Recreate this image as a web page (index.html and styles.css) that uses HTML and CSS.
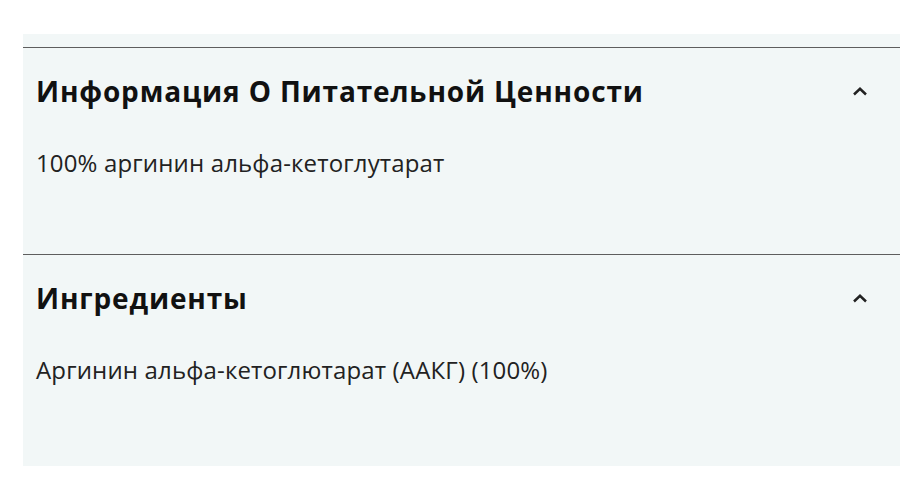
FILE: index.html
```html
<!DOCTYPE html>
<html lang="ru">
<head>
<meta charset="utf-8">
<link rel="stylesheet" href="styles.css">
</head>
<body>
<div class="panel">
  <section class="acc">
    <div class="acc-head">
      <h2 class="acc-title">Информация О Питательной Ценности</h2>
      <svg class="chev" width="14" height="9" viewBox="0 0 14 9"><path d="M1 7.5 L7 1.8 L13 7.5" fill="none" stroke="#222" stroke-width="2.5"/></svg>
    </div>
    <p class="acc-body">100% аргинин альфа-кетоглутарат</p>
  </section>
  <section class="acc acc-last">
    <div class="acc-head">
      <h2 class="acc-title">Ингредиенты</h2>
      <svg class="chev" width="14" height="9" viewBox="0 0 14 9"><path d="M1 7.5 L7 1.8 L13 7.5" fill="none" stroke="#222" stroke-width="2.5"/></svg>
    </div>
    <p class="acc-body">Аргинин альфа-кетоглютарат (ААКГ) (100%)</p>
  </section>
</div>
</body>
</html>
```
FILE: styles.css
```css
html, body { margin: 0; padding: 0; background: #fff; }
body { font-family: "Open Sans", "Noto Sans", sans-serif; color: #1a1a1a; }
.panel {
  margin: 34px 0 0 23px;
  width: 877px;
  padding-top: 13px;
  background: #f2f7f7;
}
.acc {
  border-top: 1px solid #5e5e5e;
  height: 206px;
  padding: 0 13px;
}
.acc-last { height: 211px; }
.acc-head {
  display: flex;
  align-items: center;
  justify-content: space-between;
  padding: 25px 20px 0 0;
}
.acc-title {
  margin: 0;
  font-size: 28px;
  font-weight: 700;
  line-height: 36px;
  letter-spacing: 0.85px;
  color: #111;
}
.chev { display: block; }
.acc-body {
  margin: 38px 0 0 0;
  font-size: 24px;
  line-height: 32px;
  letter-spacing: 0.15px;
  color: #222;
}
```
